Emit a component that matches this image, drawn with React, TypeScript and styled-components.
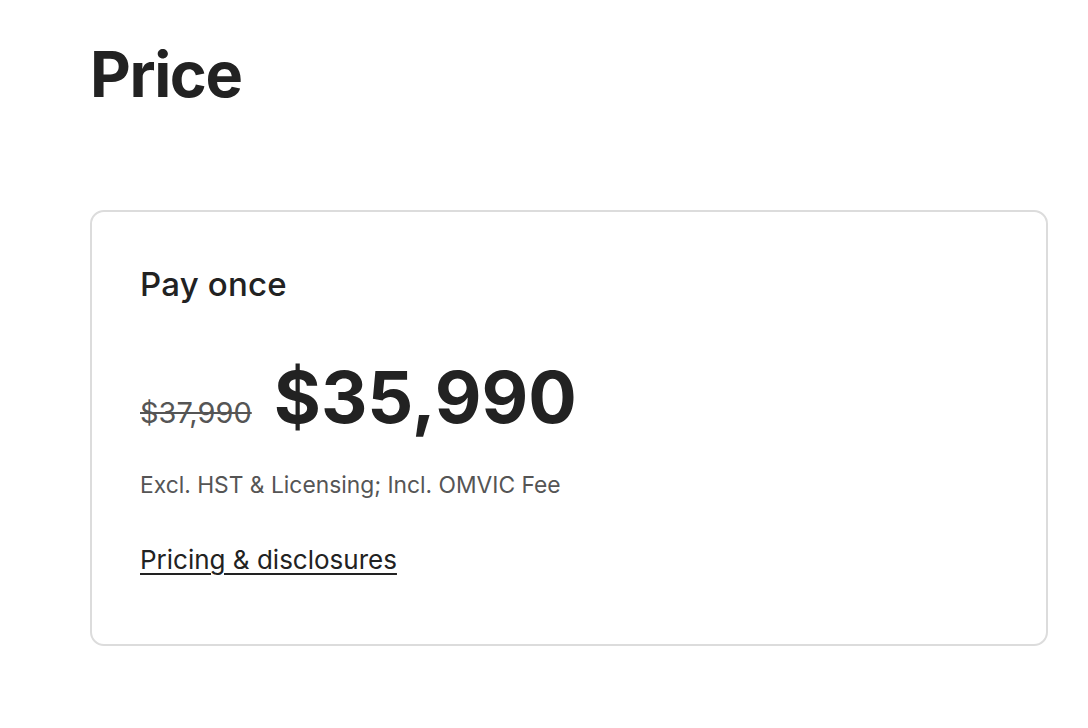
import React from "react";
import styled, { createGlobalStyle } from "styled-components";

const Global = createGlobalStyle`
  html, body { margin: 0; padding: 0; background: #fff; }
  body { font-family: Inter, "Noto Sans", sans-serif; color: #222; }
`;

const Page = styled.main`
  padding: 36px 40px 0 90px;
  width: 1088px;
  box-sizing: border-box;
`;

const Title = styled.h1`
  margin: 0;
  font-size: 63px;
  line-height: 76px;
  font-weight: 700;
  letter-spacing: -1.4px;
  color: #222;
`;

const Card = styled.section`
  margin-top: 98px;
  width: 958px;
  height: 436px;
  box-sizing: border-box;
  border: 2px solid #dcdcdc;
  border-radius: 14px;
  padding: 52px 48px;
  display: flex;
  flex-direction: column;
`;

const CardTitle = styled.h2`
  margin: 0;
  font-size: 33px;
  line-height: 40px;
  font-weight: 500;
  letter-spacing: 0.2px;
  color: #222;
`;

const PriceRow = styled.div`
  margin-top: 51px;
  display: flex;
  align-items: baseline;
  gap: 22px;
`;

const OldPrice = styled.s`
  font-size: 29px;
  font-weight: 400;
  color: #555;
`;

const NewPrice = styled.span`
  font-size: 72px;
  line-height: 84px;
  font-weight: 700;
  color: #222;
`;

const Note = styled.p`
  margin: 31px 0 0;
  font-size: 22.8px;
  line-height: 30px;
  color: #555;
`;

const Link = styled.a`
  margin-top: 43px;
  font-size: 26px;
  line-height: 34px;
  color: #222;
  text-decoration: underline;
  text-underline-offset: 4px;
  text-decoration-thickness: 1.5px;
  align-self: flex-start;
`;

export default function App() {
  return (
    <>
      <Global />
      <Page>
        <Title>Price</Title>
        <Card>
          <CardTitle>Pay once</CardTitle>
          <PriceRow>
            <OldPrice>$37,990</OldPrice>
            <NewPrice>$35,990</NewPrice>
          </PriceRow>
          <Note>Excl. HST &amp; Licensing; Incl. OMVIC Fee</Note>
          <Link href="#">Pricing &amp; disclosures</Link>
        </Card>
      </Page>
    </>
  );
}
